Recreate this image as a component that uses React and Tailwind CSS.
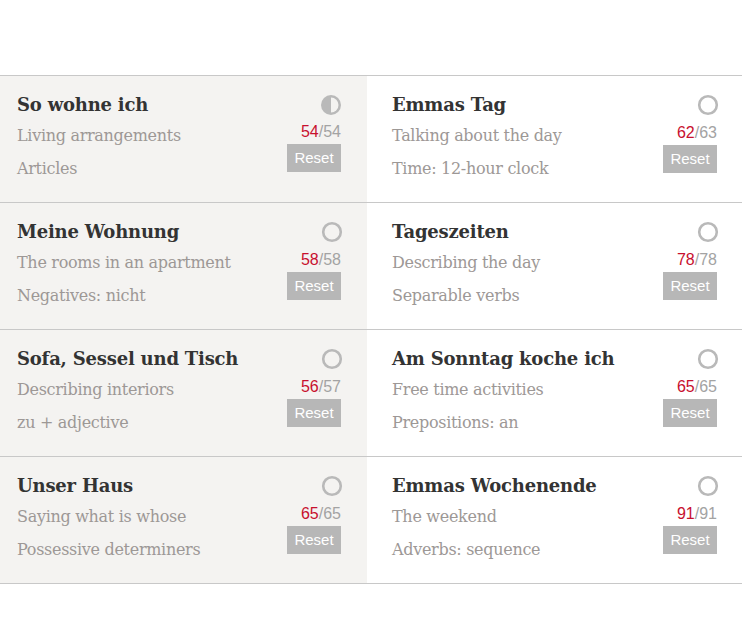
import React from 'react';

const rows = [
  [
    { title: 'So wohne ich', sub: 'Living arrangements', topic: 'Articles', done: 54, total: 54, half: true },
    { title: 'Emmas Tag', sub: 'Talking about the day', topic: 'Time: 12-hour clock', done: 62, total: 63 },
  ],
  [
    { title: 'Meine Wohnung', sub: 'The rooms in an apartment', topic: 'Negatives: nicht', done: 58, total: 58 },
    { title: 'Tageszeiten', sub: 'Describing the day', topic: 'Separable verbs', done: 78, total: 78 },
  ],
  [
    { title: 'Sofa, Sessel und Tisch', sub: 'Describing interiors', topic: 'zu + adjective', done: 56, total: 57 },
    { title: 'Am Sonntag koche ich', sub: 'Free time activities', topic: 'Prepositions: an', done: 65, total: 65 },
  ],
  [
    { title: 'Unser Haus', sub: 'Saying what is whose', topic: 'Possessive determiners', done: 65, total: 65 },
    { title: 'Emmas Wochenende', sub: 'The weekend', topic: 'Adverbs: sequence', done: 91, total: 91 },
  ],
];

function Status({ half }) {
  if (half) {
    return (
      <svg width="20" height="20" viewBox="0 0 20 20">
        <circle cx="10" cy="10" r="10" fill="#b9b9b9" />
        <path d="M10 2.5 A7.5 7.5 0 0 1 10 17.5 Z" fill="#f4f3f1" />
      </svg>
    );
  }
  return (
    <svg width="22" height="22" viewBox="0 0 22 22" className="-mr-[2px] -mt-[1px]">
      <circle cx="11" cy="11" r="8.8" fill="none" stroke="#b9b9b9" strokeWidth="2.6" />
    </svg>
  );
}

function Lesson({ item, shaded }) {
  return (
    <div
      className={
        'flex justify-between ' +
        (shaded ? 'w-[367px] bg-[#f4f3f1] pl-[17px] pr-[26px]' : 'w-[375px] pl-[25px] pr-[25px]')
      }
    >
      <div className="pt-[15px] font-['DejaVu_Serif',serif]">
        <h3 className="text-[18px] leading-[28px] font-bold text-[#333] tracking-[-0.2px]">{item.title}</h3>
        <p className="text-[16px] leading-[33px] text-[#9d9896] tracking-[-0.3px]">{item.sub}</p>
        <p className="text-[16px] leading-[33px] text-[#9d9896] tracking-[-0.3px]">{item.topic}</p>
      </div>
      <div className="flex flex-col items-end pt-[19px] font-['Liberation_Sans',Arial,sans-serif]">
        <Status half={item.half} />
        <div className="mt-[8px] text-[16px] leading-[18px]">
          <span className="text-[#c8102e]">{item.done}</span>
          <span className="text-[#a3a3a3]">/{item.total}</span>
        </div>
        <button
          type="button"
          className="mt-[3px] h-[28px] w-[54px] bg-[#b7b7b7] text-[15px] text-white"
        >
          Reset
        </button>
      </div>
    </div>
  );
}

export default function App() {
  return (
    <div className="min-h-[631px] bg-white pt-[75px]">
      <div className="w-[742px] border-t border-[#c8c8c8]">
        {rows.map((row, i) => (
          <div key={i} className="flex h-[127px] border-b border-[#c8c8c8]">
            <Lesson item={row[0]} shaded />
            <Lesson item={row[1]} />
          </div>
        ))}
      </div>
    </div>
  );
}
